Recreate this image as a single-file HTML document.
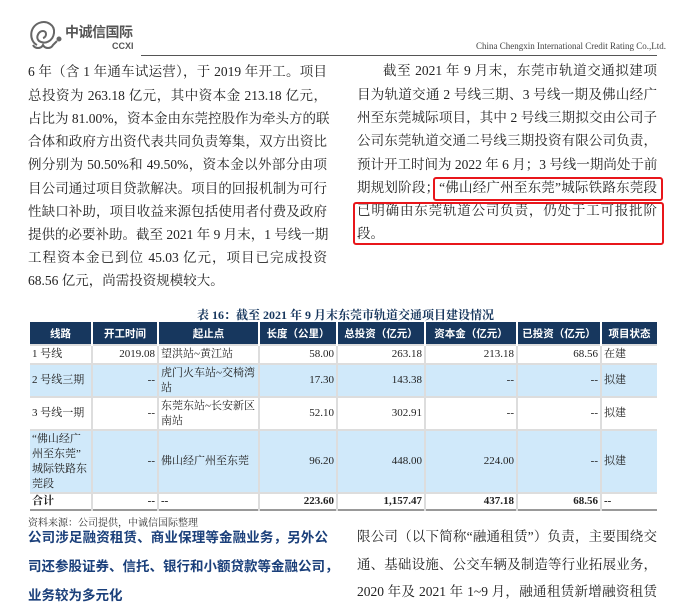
<!DOCTYPE html>
<html><head><meta charset="utf-8"><style>
*{margin:0;padding:0;box-sizing:border-box}
body{width:700px;height:606px;background:#fff;position:relative;overflow:hidden;font-family:"Liberation Serif","Noto Serif CJK SC",serif;color:#222}
.l{position:absolute;font-size:13.5px;line-height:20px;white-space:nowrap;text-align:justify;text-align-last:justify}
.L{left:28px;width:299px}
.R{left:357px;width:300px}
.nj{text-align-last:left}
.box{position:absolute;border:2px solid #e8161b;border-radius:3px}
table{position:absolute;left:30px;top:322px;width:627px;border-collapse:collapse;font-size:11px;table-layout:fixed}
th{background:#17375e;color:#fff;height:23px;font-weight:bold;border-left:2px solid #fff;font-family:"Liberation Sans","Noto Sans CJK SC",sans-serif;font-size:10.5px}
th:first-child{border-left:none}
td{border-left:2px solid #ddd;border-top:2px solid #ddd;padding:0 2px;line-height:15px;vertical-align:middle}
td:first-child{border-left:none}
tr.b td{background:#d0e9fa}
.r{text-align:right}
.h{position:absolute;left:28px;font-size:13.5px;font-weight:bold;color:#1a3f7a;font-family:"Liberation Sans","Noto Sans CJK SC",sans-serif;line-height:20px;width:300px;text-align:justify;text-align-last:justify;white-space:nowrap}
</style></head><body>
<svg style="position:absolute;left:27px;top:19px" width="36" height="32" viewBox="0 0 36 32"><g fill="none" stroke="#666" stroke-width="2"><path d="M10 26 C2 22 2 8 12 4 C20 1 28 6 27 14 C26 22 18 26 12 22 C8 18 12 12 16 12 C20 12 20 18 16 19"/><path d="M6 26 C8 30 14 30 16 26 C18 30 24 30 26 26 L30 22"/><circle cx="32" cy="20" r="1.5" fill="#666"/></g></svg>
<div style="position:absolute;left:65px;top:25px;font-size:14px;font-weight:bold;color:#555;font-family:'Liberation Sans','Noto Sans CJK SC',sans-serif;letter-spacing:-0.5px;line-height:15px">中诚信国际</div>
<div style="position:absolute;left:112px;top:41px;font-size:9px;font-weight:bold;color:#555;font-family:'Liberation Sans',sans-serif;line-height:10px">CCXI</div>
<div style="position:absolute;left:141px;top:55px;width:516px;height:1px;background:#555"></div>
<div style="position:absolute;left:476px;top:41px;font-size:9px;color:#444">China Chengxin International Credit Rating Co.,Ltd.</div>

<div class="l L" style="top:62px">6 年（含 1 年通车试运营），于 2019 年开工。项目</div>
<div class="l L" style="top:86px">总投资为 263.18 亿元，其中资本金 213.18 亿元，</div>
<div class="l L" style="top:109px">占比为 81.00%，资本金由东莞控股作为牵头方的联</div>
<div class="l L" style="top:132px">合体和政府方出资代表共同负责筹集，双方出资比</div>
<div class="l L" style="top:155px">例分别为 50.50%和 49.50%，资本金以外部分由项</div>
<div class="l L" style="top:179px">目公司通过项目贷款解决。项目的回报机制为可行</div>
<div class="l L" style="top:202px">性缺口补助，项目收益来源包括使用者付费及政府</div>
<div class="l L" style="top:225px">提供的必要补助。截至 2021 年 9 月末，1 号线一期</div>
<div class="l L" style="top:248px">工程资本金已到位 45.03 亿元，项目已完成投资</div>
<div class="l L nj" style="top:271px">68.56 亿元，尚需投资规模较大。</div>

<div class="l" style="top:61px;left:383px;width:274px">截至 2021 年 9 月末，东莞市轨道交通拟建项</div>
<div class="l R" style="top:85px">目为轨道交通 2 号线三期、3 号线一期及佛山经广</div>
<div class="l R" style="top:108px">州至东莞城际项目，其中 2 号线三期拟交由公司子</div>
<div class="l R" style="top:131px">公司东莞轨道交通二号线三期投资有限公司负责，</div>
<div class="l R" style="top:155px">预计开工时间为 2022 年 6 月；3 号线一期尚处于前</div>
<div class="l R" style="top:178px">期规划阶段；“佛山经广州至东莞”城际铁路东莞段</div>
<div class="l R" style="top:201px">已明确由东莞轨道公司负责，仍处于工可报批阶</div>
<div class="l R nj" style="top:224px">段。</div>
<div class="box" style="left:433px;top:177px;width:230px;height:24px"></div>
<div class="box" style="left:353px;top:202px;width:311px;height:43px"></div>

<div style="position:absolute;left:197px;top:306px;font-size:12px;font-weight:bold;color:#17375e;white-space:nowrap">表 16：截至 2021 年 9 月末东莞市轨道交通项目建设情况</div>

<table>
<colgroup><col style="width:62px"><col style="width:66px"><col style="width:101px"><col style="width:78px"><col style="width:88px"><col style="width:92px"><col style="width:84px"><col style="width:56px"></colgroup>
<tr><th>线路</th><th>开工时间</th><th>起止点</th><th>长度（公里）</th><th>总投资（亿元）</th><th>资本金（亿元）</th><th>已投资（亿元）</th><th>项目状态</th></tr>
<tr style="height:19px"><td>1 号线</td><td class="r">2019.08</td><td>望洪站~黄江站</td><td class="r">58.00</td><td class="r">263.18</td><td class="r">213.18</td><td class="r">68.56</td><td>在建</td></tr>
<tr class="b" style="height:33px"><td>2 号线三期</td><td class="r">--</td><td>虎门火车站~交椅湾站</td><td class="r">17.30</td><td class="r">143.38</td><td class="r">--</td><td class="r">--</td><td>拟建</td></tr>
<tr style="height:33px"><td>3 号线一期</td><td class="r">--</td><td>东莞东站~长安新区南站</td><td class="r">52.10</td><td class="r">302.91</td><td class="r">--</td><td class="r">--</td><td>拟建</td></tr>
<tr class="b" style="height:63px"><td>“佛山经广<br>州至东莞”<br>城际铁路东<br>莞段</td><td class="r">--</td><td>佛山经广州至东莞</td><td class="r">96.20</td><td class="r">448.00</td><td class="r">224.00</td><td class="r">--</td><td>拟建</td></tr>
<tr style="height:17px;font-weight:bold;border-bottom:2px solid #999"><td>合计</td><td class="r">--</td><td>--</td><td class="r">223.60</td><td class="r">1,157.47</td><td class="r">437.18</td><td class="r">68.56</td><td>--</td></tr>
</table>

<div style="position:absolute;left:28px;top:514px;font-size:10px;color:#333">资料来源：公司提供，中诚信国际整理</div>

<div class="h" style="top:528px">公司涉足融资租赁、商业保理等金融业务，另外公</div>
<div class="h" style="top:557px">司还参股证券、信托、银行和小额贷款等金融公司，</div>
<div class="h" style="top:586px;text-align-last:left">业务较为多元化</div>

<div class="l R" style="top:527px">限公司（以下简称“融通租赁”）负责，主要围绕交</div>
<div class="l R" style="top:555px">通、基础设施、公交车辆及制造等行业拓展业务，</div>
<div class="l R" style="top:582px">2020 年及 2021 年 1~9 月，融通租赁新增融资租赁</div>
</body></html>
